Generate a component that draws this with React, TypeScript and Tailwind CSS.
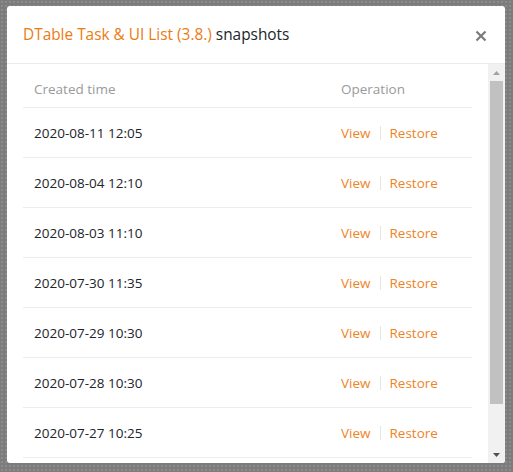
import React from "react";

const rows = [
  "2020-08-11 12:05",
  "2020-08-04 12:10",
  "2020-08-03 11:10",
  "2020-07-30 11:35",
  "2020-07-29 10:30",
  "2020-07-28 10:30",
  "2020-07-27 10:25",
];

export default function App() {
  return (
    <div
      className="w-[513px] h-[472px] overflow-hidden bg-[#7c7c7c] bg-[radial-gradient(#8c8c8c_1px,transparent_1px)] bg-[length:4px_4px] pt-[6px] pl-[7px]"
      style={{ fontFamily: '"Open Sans", "Noto Sans", sans-serif' }}
    >
      <div className="w-[498px] h-[457px] bg-white rounded-[3px] flex flex-col overflow-hidden">
        <div className="h-[58px] shrink-0 flex items-center justify-between pl-4 pr-[18px] border-b border-[#e9ecef]">
          <h5 className="text-[15.4px] leading-6 font-medium text-[#212529] mt-[1px]">
            <span className="text-[#eb7b12]">DTable Task &amp; UI List (3.8.)</span> snapshots
          </h5>
          <svg width="12" height="12" viewBox="0 0 12 12" className="mt-[2px]">
            <path d="M1.5 1.5 L10.5 10.5 M10.5 1.5 L1.5 10.5" stroke="#7a7a7a" strokeWidth="2.2" />
          </svg>
        </div>
        <div className="flex-1 flex min-h-0">
          <div className="flex-1 overflow-hidden px-4">
            <table className="w-full border-collapse text-[13.5px]">
              <thead>
                <tr className="border-b border-[#ececec]">
                  <th className="w-[307px] text-left font-normal text-[#9a9a9a] pl-[11px] pt-[15px] pb-[8px] leading-5">Created time</th>
                  <th className="text-left font-normal text-[#9a9a9a] pl-[11px] pt-[15px] pb-[8px] leading-5">Operation</th>
                </tr>
              </thead>
              <tbody>
                {rows.map((r) => (
                  <tr key={r} className="border-b border-[#ececec]">
                    <td className="pl-[11px] pt-[15px] pb-[14px] leading-5 text-[#212529]">{r}</td>
                    <td className="pl-[11px] pt-[15px] pb-[14px] leading-5">
                      <div className="flex items-center">
                        <span className="text-[#ee8427]">View</span>
                        <span className="mx-[9px] w-px h-[14px] bg-[#e0e8e8]" />
                        <span className="text-[#ee8427]">Restore</span>
                      </div>
                    </td>
                  </tr>
                ))}
              </tbody>
            </table>
          </div>
          <div className="w-[17px] shrink-0 bg-[#f1f1f1] flex flex-col items-center">
            <div className="h-[17px] flex items-center justify-center">
              <svg width="7" height="4" viewBox="0 0 7 4"><path d="M0 4 L3.5 0 L7 4 Z" fill="#a3a3a3" /></svg>
            </div>
            <div className="w-[13px] h-[323px] bg-[#c1c1c1]" />
            <div className="flex-1" />
            <div className="h-[17px] flex items-center justify-center">
              <svg width="7" height="4" viewBox="0 0 7 4"><path d="M0 0 L7 0 L3.5 4 Z" fill="#505050" /></svg>
            </div>
          </div>
        </div>
      </div>
    </div>
  );
}
